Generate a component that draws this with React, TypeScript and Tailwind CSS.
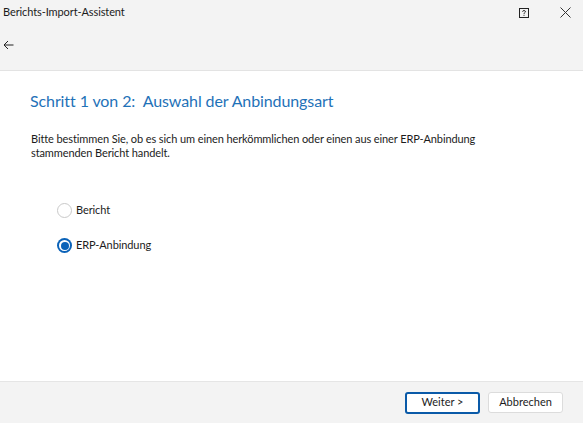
import { useState } from "react";

const font = { fontFamily: 'Lato, "Noto Sans", "Liberation Sans", sans-serif' };

function Radio({ checked }: { checked: boolean }) {
  return checked ? (
    <span className="flex h-[15px] w-[15px] items-center justify-center rounded-full bg-[#0a62b8]">
      <span className="flex h-[11px] w-[11px] items-center justify-center rounded-full bg-white">
        <span className="h-[8px] w-[8px] rounded-full bg-[#0a62b8]" />
      </span>
    </span>
  ) : (
    <span className="h-[15px] w-[15px] rounded-full border border-[#c9c9c9] bg-white" />
  );
}

export default function App() {
  const [mode, setMode] = useState("erp");
  const options = [
    { id: "bericht", label: "Bericht" },
    { id: "erp", label: "ERP-Anbindung" },
  ];

  return (
    <div className="flex h-[423px] w-[583px] flex-col bg-white text-[#1c1c1c]" style={font}>
      <div className="flex h-[71px] flex-col border-b border-[#e3e3e3] bg-[#f3f3f3]">
        <div className="flex h-[25px] items-center">
          <span className="pl-[3px] text-[11px] tracking-[-0.1px]">Berichts-Import-Assistent</span>
          <div className="ml-auto flex items-center">
            <svg width="10" height="10" viewBox="0 0 10 10" className="mr-[31px]">
              <rect x="0.5" y="0.5" width="9" height="9" fill="none" stroke="#222" />
              <path d="M3.5 3.6 C3.5 2.3 6.5 2.3 6.5 3.6 C6.5 4.6 5 4.6 5 5.9" fill="none" stroke="#222" strokeWidth="1" />
              <rect x="4.5" y="6.8" width="1" height="1" fill="#222" />
            </svg>
            <svg width="11" height="11" viewBox="0 0 11 11" className="mr-[12px]">
              <path d="M0.5 0.5 L10.5 10.5 M10.5 0.5 L0.5 10.5" stroke="#333" strokeWidth="1" />
            </svg>
          </div>
        </div>
        <div className="flex h-[40px] items-center pl-[3px]">
          <svg width="11" height="10" viewBox="0 0 11 10">
            <path d="M10.5 5 H1 M5 1 L1 5 L5 9" fill="none" stroke="#222" strokeWidth="1" />
          </svg>
        </div>
      </div>

      <div className="flex flex-1 flex-col">
        <h1 className="pl-[30px] pt-[19px] text-[16px] leading-[22px] tracking-[-0.1px] text-[#1f72b8]">
          Schritt 1 von 2:&nbsp; Auswahl der Anbindungsart
        </h1>
        <p className="pl-[31px] pt-[20px] text-[11px] leading-[14px] tracking-[-0.1px]">
          Bitte bestimmen Sie, ob es sich um einen herkömmlichen oder einen aus einer ERP-Anbindung
          <br />
          stammenden Bericht handelt.
        </p>
        <div className="flex flex-col gap-[20px] pl-[57px] pt-[43px]">
          {options.map((o) => (
            <label key={o.id} className="flex h-[15px] cursor-default items-center gap-[4px]" onClick={() => setMode(o.id)}>
              <Radio checked={mode === o.id} />
              <span className="text-[11px] tracking-[-0.1px]">{o.label}</span>
            </label>
          ))}
        </div>
      </div>

      <div className="flex h-[42px] items-center justify-end gap-[8px] border-t border-[#e5e5e5] bg-[#f3f3f3] pr-[20px]">
        <button className="h-[22px] w-[75px] rounded-[3px] border-2 border-[#0a5aa8] bg-white text-[11px]">
          Weiter &gt;
        </button>
        <button className="h-[21px] w-[75px] rounded-[3px] border border-[#dcdcdc] bg-white text-[11px]">
          Abbrechen
        </button>
      </div>
    </div>
  );
}
